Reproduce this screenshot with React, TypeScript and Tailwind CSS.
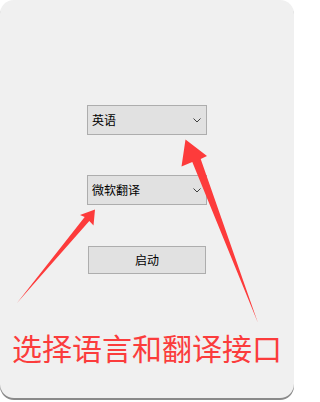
const font = { fontFamily: '"Noto Sans CJK SC", "Noto Sans", sans-serif' };

const Chevron = () => (
  <svg width="8" height="5" viewBox="0 0 8 5" className="text-[#404040]">
    <path d="M0.5 0.5 L4 4 L7.5 0.5" fill="none" stroke="currentColor" strokeWidth="1" />
  </svg>
);

const Select = ({ label }: { label: string }) => (
  <div className="flex h-[30px] w-[120px] items-center justify-between border border-[#adadad] bg-[#e1e1e1] pl-[4px] pr-[5px] text-[12px] text-black">
    <span>{label}</span>
    <Chevron />
  </div>
);

const App = () => {
  return (
    <div className="h-[402px] w-[295px] bg-white" style={font}>
      <div className="relative flex h-[398px] w-[294px] flex-col rounded-[14px] bg-[#f0f0f0] pl-[87px] pt-[105px] shadow-[0_2px_0_#8a8a8a]">
        <Select label="英语" />
        <div className="mt-[40px]">
          <Select label="微软翻译" />
        </div>
        <button className="ml-[1px] mt-[41px] h-[28px] w-[118px] border border-[#adadad] bg-[#e1e1e1] text-[12px] text-black">
          启动
        </button>
        <p className="-ml-[87px] mt-[56px] text-center text-[30px] leading-[34px] text-[#fb3c3c]">
          选择语言和翻译接口
        </p>

        {/* annotation arrows */}
        <svg className="pointer-events-none absolute left-0 top-0" width="294" height="398" viewBox="0 0 294 398">
          <polygon
            points="185.5,139.5 207,156 200.7,158.9 258,323 192.3,162.1 181.5,166.5"
            fill="#fd3b3b"
          />
          <polygon
            points="95,209.5 93.5,225.5 89.3,220.9 17,303 84.7,217.1 80,215"
            fill="#fd3b3b"
          />
        </svg>
      </div>
    </div>
  );
};

export default App;
